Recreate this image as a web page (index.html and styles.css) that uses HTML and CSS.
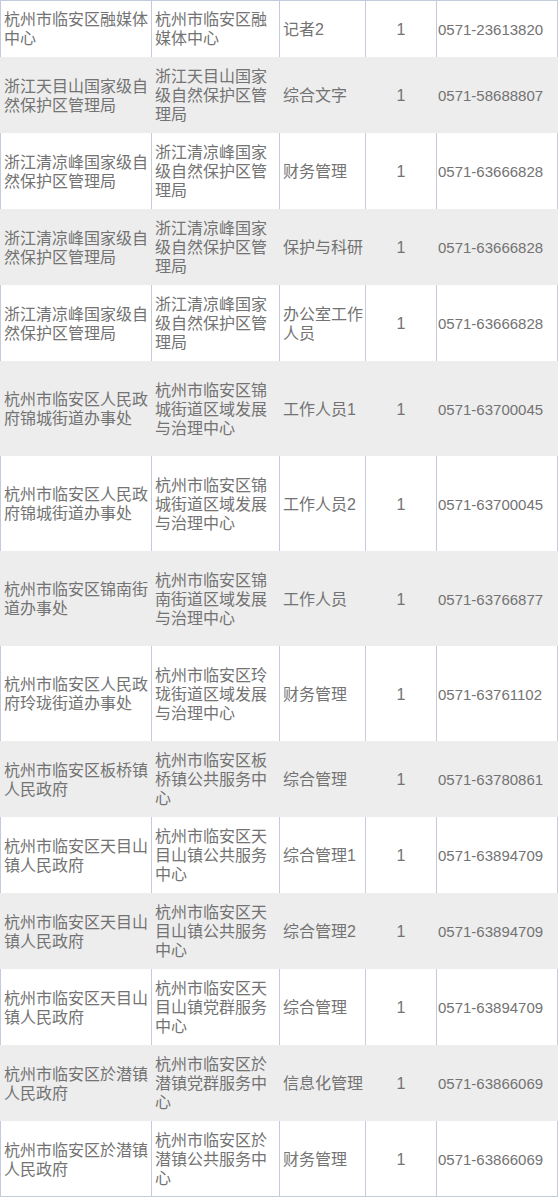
FILE: index.html
```html
<!DOCTYPE html>
<html lang="zh-CN">
<head>
<meta charset="utf-8">
<title>岗位表</title>
<link rel="stylesheet" href="styles.css">
</head>
<body>
<table class="jobs">
  <colgroup>
    <col class="c-unit">
    <col class="c-dept">
    <col class="c-post">
    <col class="c-num">
    <col class="c-tel">
  </colgroup>
  <tbody>
    <tr><td>杭州市临安区融媒体中心</td><td>杭州市临安区融媒体中心</td><td>记者2</td><td class="num">1</td><td class="tel">0571-23613820</td></tr>
    <tr><td>浙江天目山国家级自然保护区管理局</td><td>浙江天目山国家级自然保护区管理局</td><td>综合文字</td><td class="num">1</td><td class="tel">0571-58688807</td></tr>
    <tr><td>浙江清凉峰国家级自然保护区管理局</td><td>浙江清凉峰国家级自然保护区管理局</td><td>财务管理</td><td class="num">1</td><td class="tel">0571-63666828</td></tr>
    <tr><td>浙江清凉峰国家级自然保护区管理局</td><td>浙江清凉峰国家级自然保护区管理局</td><td>保护与科研</td><td class="num">1</td><td class="tel">0571-63666828</td></tr>
    <tr><td>浙江清凉峰国家级自然保护区管理局</td><td>浙江清凉峰国家级自然保护区管理局</td><td>办公室工作人员</td><td class="num">1</td><td class="tel">0571-63666828</td></tr>
    <tr class="tall"><td>杭州市临安区人民政府锦城街道办事处</td><td>杭州市临安区锦城街道区域发展与治理中心</td><td>工作人员1</td><td class="num">1</td><td class="tel">0571-63700045</td></tr>
    <tr class="tall"><td>杭州市临安区人民政府锦城街道办事处</td><td>杭州市临安区锦城街道区域发展与治理中心</td><td>工作人员2</td><td class="num">1</td><td class="tel">0571-63700045</td></tr>
    <tr class="tall"><td>杭州市临安区锦南街道办事处</td><td>杭州市临安区锦南街道区域发展与治理中心</td><td>工作人员</td><td class="num">1</td><td class="tel">0571-63766877</td></tr>
    <tr class="tall"><td>杭州市临安区人民政府玲珑街道办事处</td><td>杭州市临安区玲珑街道区域发展与治理中心</td><td>财务管理</td><td class="num">1</td><td class="tel">0571-63761102</td></tr>
    <tr><td>杭州市临安区板桥镇人民政府</td><td>杭州市临安区板桥镇公共服务中心</td><td>综合管理</td><td class="num">1</td><td class="tel">0571-63780861</td></tr>
    <tr><td>杭州市临安区天目山镇人民政府</td><td>杭州市临安区天目山镇公共服务中心</td><td>综合管理1</td><td class="num">1</td><td class="tel">0571-63894709</td></tr>
    <tr><td>杭州市临安区天目山镇人民政府</td><td>杭州市临安区天目山镇公共服务中心</td><td>综合管理2</td><td class="num">1</td><td class="tel">0571-63894709</td></tr>
    <tr><td>杭州市临安区天目山镇人民政府</td><td>杭州市临安区天目山镇党群服务中心</td><td>综合管理</td><td class="num">1</td><td class="tel">0571-63894709</td></tr>
    <tr><td>杭州市临安区於潜镇人民政府</td><td>杭州市临安区於潜镇党群服务中心</td><td>信息化管理</td><td class="num">1</td><td class="tel">0571-63866069</td></tr>
    <tr><td>杭州市临安区於潜镇人民政府</td><td>杭州市临安区於潜镇公共服务中心</td><td>财务管理</td><td class="num">1</td><td class="tel">0571-63866069</td></tr>
  </tbody>
</table>
</body>
</html>
```

FILE: styles.css
```css
html, body {
  margin: 0;
  padding: 0;
  background: #ffffff;
}

.jobs {
  width: 558px;
  table-layout: fixed;
  border-collapse: separate;
  border-spacing: 0;
  font-family: "Liberation Sans", "Noto Sans CJK SC", sans-serif;
  font-size: 16px;
  line-height: 19px;
  color: #737373;
}

.c-unit { width: 151px; }
.c-dept { width: 128px; }
.c-post { width: 86px; }
.c-num  { width: 71px; }
.c-tel  { width: 122px; }

.jobs td {
  padding: 10px 1px 9px 3px;
  border-left: 1px solid #c4cbdd;
  vertical-align: middle;
  text-align: left;
  word-break: break-all;
}

.jobs td:last-child {
  border-right: 1px solid #c4cbdd;
}

.jobs tr:first-child td {
  border-top: 1px solid #c4cbdd;
  padding-top: 9px;
}

.jobs tr:last-child td {
  border-bottom: 1px solid #c4cbdd;
  padding-bottom: 8px;
}

.jobs tr:nth-child(even) td {
  background: #ededed;
  border-color: #ededed;
}

.jobs tr.tall {
  height: 95px;
}

.jobs td.num {
  text-align: center;
  padding-left: 1px;
  padding-right: 1px;
}

.jobs td.tel {
  padding-left: 1px;
  padding-right: 0;
  font-size: 15px;
  white-space: nowrap;
}
```
